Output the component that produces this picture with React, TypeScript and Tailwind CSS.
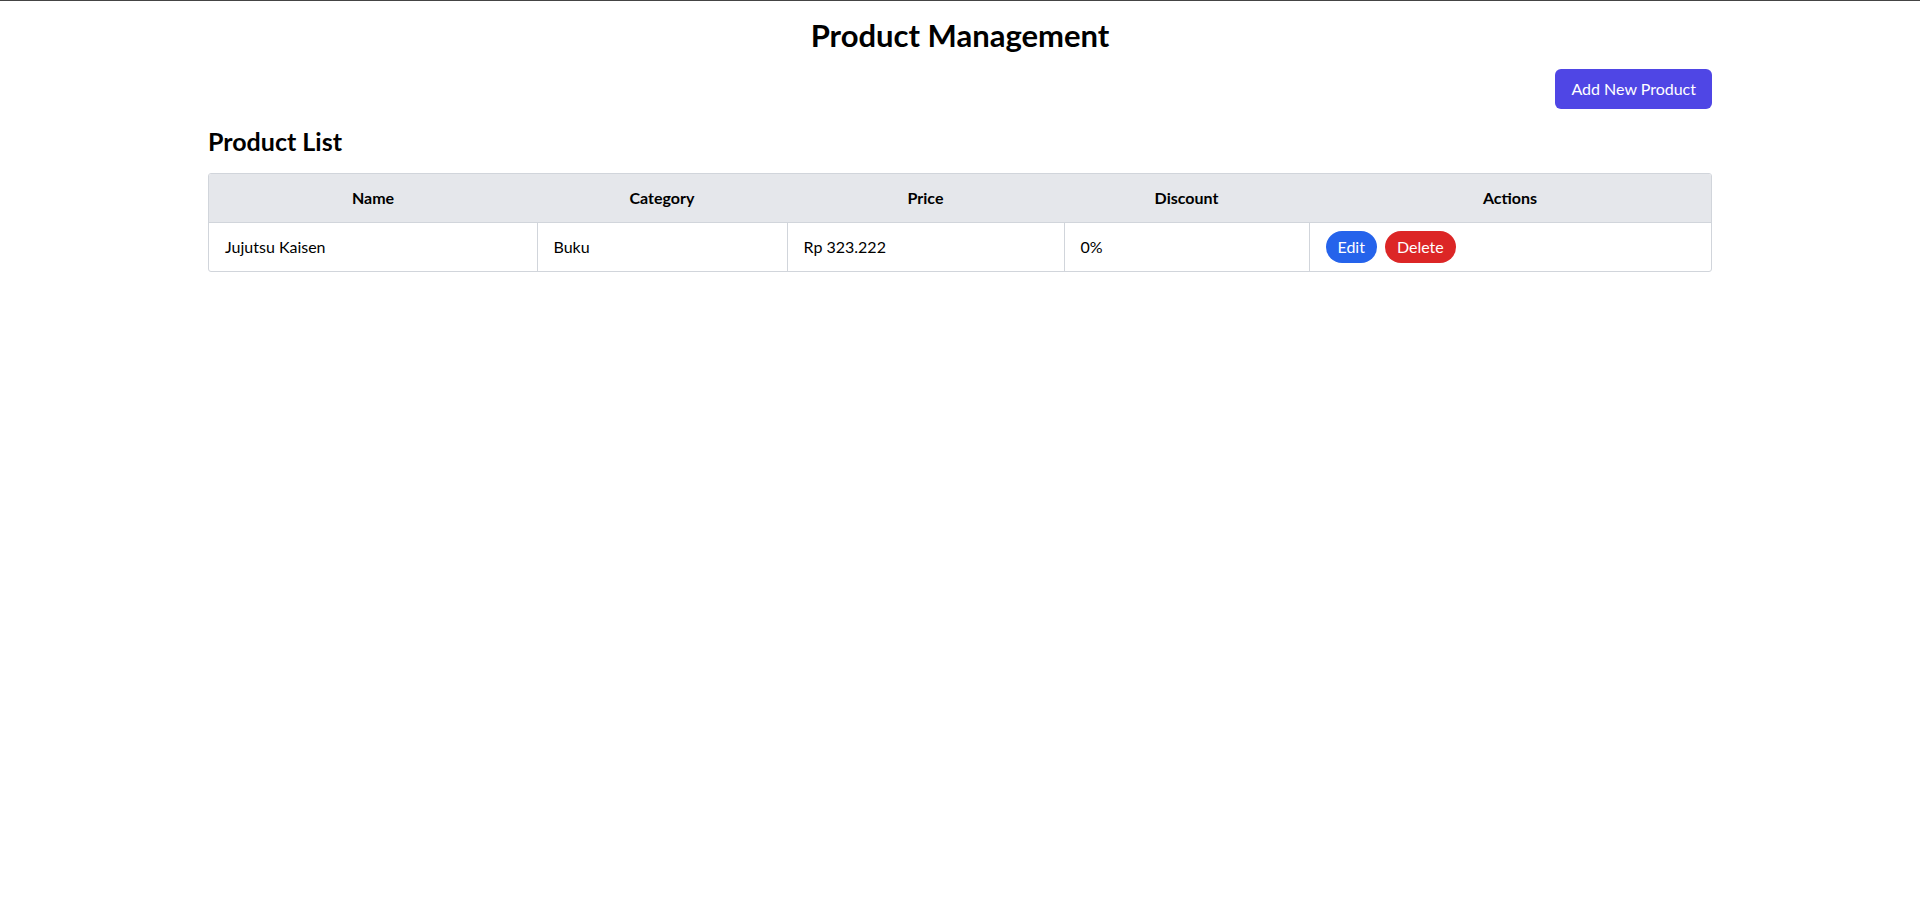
import { useState } from 'react';

type Product = {
  id: number;
  name: string;
  category: string;
  price: number;
  discount: number;
};

const formatRupiah = (n: number) => 'Rp ' + n.toLocaleString('id-ID');

export default function App() {
  const [products, setProducts] = useState<Product[]>([
    { id: 1, name: 'Jujutsu Kaisen', category: 'Buku', price: 323222, discount: 0 },
  ]);

  const handleDelete = (id: number) => {
    setProducts(products.filter((p) => p.id !== id));
  };

  return (
    <div className="min-h-screen bg-white border-t border-[#444] font-['Lato','Liberation_Sans',sans-serif] text-black">
      <div className="container mx-auto p-4">
        <h1 className="text-[31px] leading-9 font-bold text-center mb-4">Product Management</h1>
        <div className="flex justify-end mb-4">
          <button className="bg-[#4f46e5] text-white px-4 py-2 rounded-md hover:bg-[#4338ca]">Add New Product</button>
        </div>
        <h2 className="text-[25px] leading-8 font-bold mb-4 mt-[1px]">Product List</h2>
        <div className="border border-[#d1d5db] rounded-[3px] overflow-hidden">
          <table className="w-full border-collapse">
            <thead className="bg-[#e5e7eb]">
              <tr>
                <th className="w-[328px] px-4 py-3 text-center font-bold">Name</th>
                <th className="w-[250px] px-4 py-3 text-center font-bold">Category</th>
                <th className="w-[277px] px-4 py-3 text-center font-bold">Price</th>
                <th className="w-[245px] px-4 py-3 text-center font-bold">Discount</th>
                <th className="px-4 py-3 text-center font-bold">Actions</th>
              </tr>
            </thead>
            <tbody>
              {products.map((p) => (
                <tr key={p.id} className="border-t border-[#d1d5db]">
                  <td className="px-4 py-3 border-r border-[#d1d5db]">{p.name}</td>
                  <td className="px-4 py-3 border-r border-[#d1d5db]">{p.category}</td>
                  <td className="px-4 py-3 border-r border-[#d1d5db]">{formatRupiah(p.price)}</td>
                  <td className="px-4 py-3 border-r border-[#d1d5db]">{p.discount}%</td>
                  <td className="px-4 py-2">
                    <div className="flex gap-2">
                      <button className="bg-[#2563eb] text-white px-3 py-1 rounded-full">Edit</button>
                      <button onClick={() => handleDelete(p.id)} className="bg-[#dc2626] text-white px-3 py-1 rounded-full">Delete</button>
                    </div>
                  </td>
                </tr>
              ))}
            </tbody>
          </table>
        </div>
      </div>
    </div>
  );
}
